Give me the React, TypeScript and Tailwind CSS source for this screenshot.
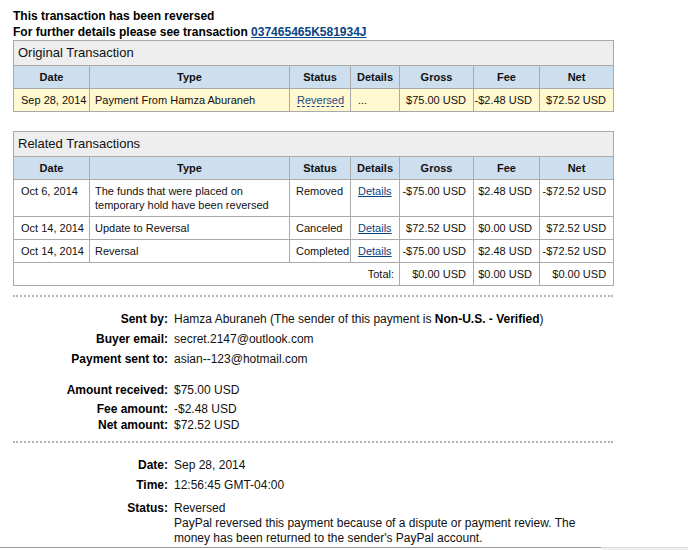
import React from "react";

const B = "border border-[#aaaaaa]";
const cols = [76, 200, 61, 49, 74, 66, 74];

function ColGroup() {
  return (
    <colgroup>
      {cols.map((w, i) => (
        <col key={i} style={{ width: w }} />
      ))}
    </colgroup>
  );
}

function HeaderRow() {
  const th = `${B} bg-[#cddeef] font-bold text-center py-[4px] px-[2px]`;
  return (
    <tr>
      <th className={th}>Date</th>
      <th className={th}>Type</th>
      <th className={th}>Status</th>
      <th className={th}>Details</th>
      <th className={th}>Gross</th>
      <th className={th}>Fee</th>
      <th className={th}>Net</th>
    </tr>
  );
}

function Title({ text }: { text: string }) {
  return (
    <tr>
      <th
        colSpan={7}
        className={`${B} bg-[#eeeeee] text-left font-normal text-[13px] leading-[16px] py-[4px] px-[4px]`}
      >
        {text}
      </th>
    </tr>
  );
}

const td = `${B} align-top py-[4px]`;
const link = "text-[#084482] underline";

const related = [
  {
    date: "Oct 6, 2014",
    type: "The funds that were placed on temporary hold have been reversed",
    status: "Removed",
    gross: "-$75.00 USD",
    fee: "$2.48 USD",
    net: "-$72.52 USD",
  },
  {
    date: "Oct 14, 2014",
    type: "Update to Reversal",
    status: "Canceled",
    gross: "$72.52 USD",
    fee: "$0.00 USD",
    net: "$72.52 USD",
  },
  {
    date: "Oct 14, 2014",
    type: "Reversal",
    status: "Completed",
    gross: "-$75.00 USD",
    fee: "$2.48 USD",
    net: "-$72.52 USD",
  },
];

function Row({ label, children, className = "" }: { label: string; children: React.ReactNode; className?: string }) {
  return (
    <div className={`grid grid-cols-[155px_1fr] gap-x-[6px] ${className}`}>
      <div className="text-right font-bold text-black">{label}</div>
      <div>{children}</div>
    </div>
  );
}

export default function App() {
  return (
    <div
      className="w-[688px] h-[550px] overflow-hidden bg-white text-[#111] flex flex-col"
      style={{ fontFamily: '"Liberation Sans", Arial, sans-serif' }}
    >
      <div className="pl-[13px] pt-[8px] w-[614px]">
        <div className="text-[12px] leading-[16px] font-bold text-black">
          <div>This transaction has been reversed</div>
          <div>
            For further details please see transaction{" "}
            <span className={link}>037465465K581934J</span>
          </div>
        </div>

        <table className="w-[600px] table-fixed border-collapse text-[11px] leading-[14px]">
          <ColGroup />
          <thead>
            <Title text="Original Transaction" />
            <HeaderRow />
          </thead>
          <tbody>
            <tr className="bg-[#fff8d0]">
              <td className={`${td} pl-[7px]`}>Sep 28, 2014</td>
              <td className={`${td} pl-[5px]`}>Payment From Hamza Aburaneh</td>
              <td className={`${td} pl-[7px]`}>
                <span className="text-[#1d4a86] border-b border-dashed border-[#1d4a86]">Reversed</span>
              </td>
              <td className={`${td} pl-[7px]`}>...</td>
              <td className={`${td} text-right pr-[7px]`}>$75.00 USD</td>
              <td className={`${td} text-right pr-[7px]`}>-$2.48 USD</td>
              <td className={`${td} text-right pr-[7px]`}>$72.52 USD</td>
            </tr>
          </tbody>
        </table>

        <table className="mt-[19px] w-[600px] table-fixed border-collapse text-[11px] leading-[14px]">
          <ColGroup />
          <thead>
            <Title text="Related Transactions" />
            <HeaderRow />
          </thead>
          <tbody>
            {related.map((r, i) => (
              <tr key={i}>
                <td className={`${td} pl-[7px]`}>{r.date}</td>
                <td className={`${td} pl-[5px] pr-[4px]`}>{r.type}</td>
                <td className={`${td} pl-[6px]`}>{r.status}</td>
                <td className={`${td} pl-[7px]`}>
                  <span className={link}>Details</span>
                </td>
                <td className={`${td} text-right pr-[7px]`}>{r.gross}</td>
                <td className={`${td} text-right pr-[7px]`}>{r.fee}</td>
                <td className={`${td} text-right pr-[7px]`}>{r.net}</td>
              </tr>
            ))}
            <tr>
              <td colSpan={4} className={`${td} text-right pr-[5px]`}>
                Total:
              </td>
              <td className={`${td} text-right pr-[7px]`}>$0.00 USD</td>
              <td className={`${td} text-right pr-[7px]`}>$0.00 USD</td>
              <td className={`${td} text-right pr-[7px]`}>$0.00 USD</td>
            </tr>
          </tbody>
        </table>

        <div className="mt-[9px] w-[600px] border-t-2 border-dotted border-[#b5b5b5]" />

        <div className="text-[12px] leading-[16px] w-[600px]">
          <Row label="Sent by:" className="mt-[14px]">
            Hamza Aburaneh (The sender of this payment is <b className="text-black">Non-U.S. - Verified</b>)
          </Row>
          <Row label="Buyer email:" className="mt-[4px]">
            secret.2147@outlook.com
          </Row>
          <Row label="Payment sent to:" className="mt-[4px]">
            asian--123@hotmail.com
          </Row>
          <Row label="Amount received:" className="mt-[15px]">
            $75.00 USD
          </Row>
          <Row label="Fee amount:" className="mt-[3px]">
            -$2.48 USD
          </Row>
          <Row label="Net amount:">$72.52 USD</Row>

          <div className="mt-[8px] border-t-2 border-dotted border-[#b5b5b5]" />

          <Row label="Date:" className="mt-[14px]">
            Sep 28, 2014
          </Row>
          <Row label="Time:" className="mt-[4px]">
            12:56:45 GMT-04:00
          </Row>
          <Row label="Status:" className="mt-[8px] leading-[15px]">
            <div>Reversed</div>
            <div>
              PayPal reversed this payment because of a dispute or payment review. The money has been returned to the
              sender's PayPal account.
            </div>
          </Row>
        </div>
      </div>
      <div className="flex mt-[1px] h-[4px] shrink-0">
        <div className="w-[601px] border-t border-[#9a9a9a] bg-white" />
        <div className="flex-1 border-t border-[#dcdcdc] bg-[#f0f0f0]" />
      </div>
    </div>
  );
}
